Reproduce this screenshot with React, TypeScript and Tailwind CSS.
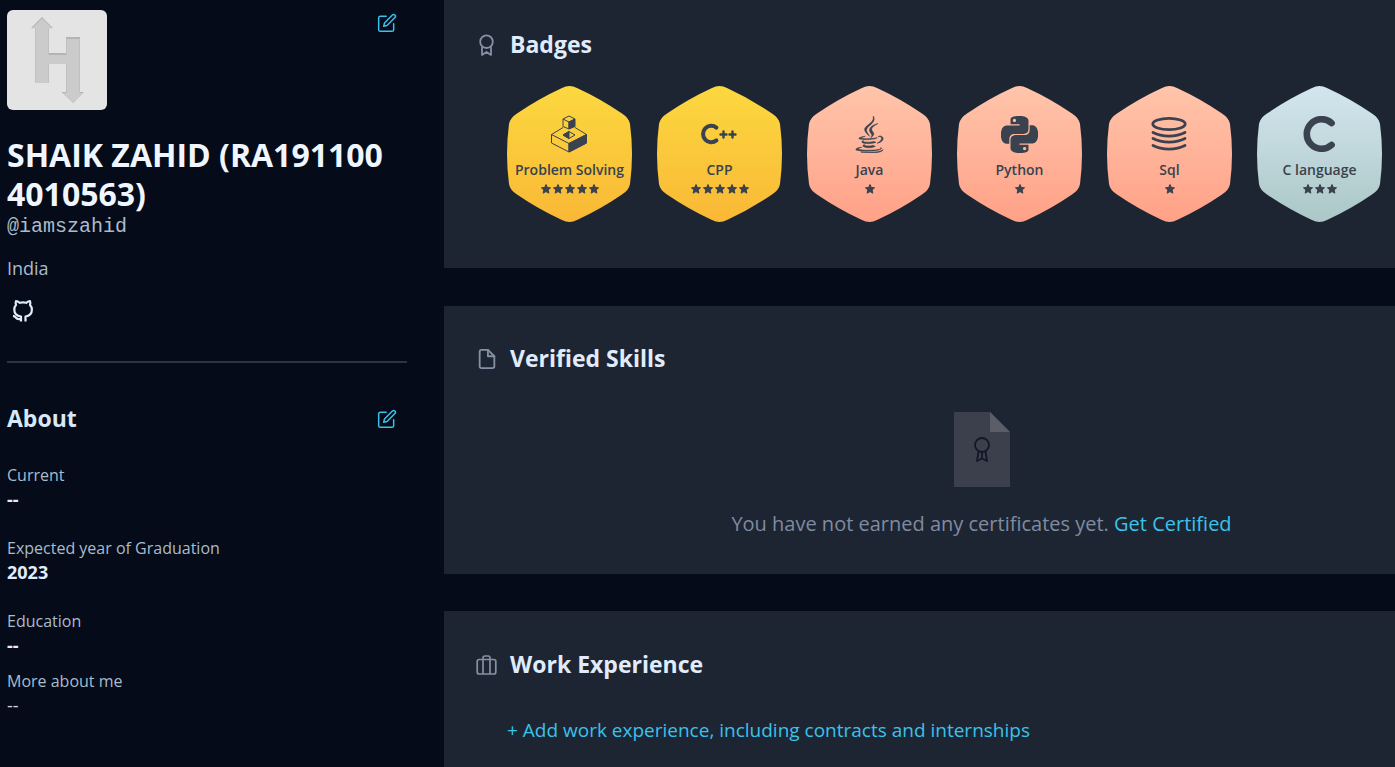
import type { ReactNode } from 'react';
import { FiEdit, FiFile } from 'react-icons/fi';
import { FaJava } from 'react-icons/fa';
import { SiPython } from 'react-icons/si';

type Tone = 'gold' | 'bronze' | 'silver';

const TONES: Record<Tone, [string, string]> = {
  gold: ['#fcd83f', '#f9b836'],
  bronze: ['#ffc5ab', '#ffa187'],
  silver: ['#d3e6ef', '#abc7c6'],
};

function ProblemSolvingIcon() {
  return (
    <svg width="37" height="38" viewBox="0 0 37 38" fill="none" stroke="currentColor" strokeWidth="1" strokeLinejoin="round">
      <path d="M12 12.5 .5 19.5v8.5L18 37l17.5-9v-8.5L24 12.5" />
      <path d="M.5 19.5 18 28.5l17.5-9M18 28.5V37" />
      <path d="M18 28.5 35.5 19.5V28L18 37z" fill="currentColor" />
      <path d="M12 20l6-3.5 6 3.5-6 3.5z" />
      <path d="M12 20l6-3.5v7z" fill="currentColor" />
      <path d="M12 4l6-3 6 3-6 3zM12 4v7.5l6 2.5V7" />
      <path d="M18 7l6-3v7.5L18 14z" fill="currentColor" />
    </svg>
  );
}

function CppIcon() {
  return (
    <svg width="39" height="36" viewBox="0 0 39 36" fill="none" stroke="currentColor" strokeLinecap="round">
      <path d="M16.4 11.6a8.2 8.2 0 1 0 0 12.8" strokeWidth="4" />
      <path d="M20.5 18.5h6M23.5 15.5v6M29.5 18.5h6M32.5 15.5v6" strokeWidth="2.4" />
    </svg>
  );
}

function SqlIcon() {
  return (
    <svg width="37" height="36" viewBox="0 0 37 36" fill="none" stroke="currentColor" strokeWidth="2.8" strokeLinecap="round">
      <ellipse cx="18" cy="8" rx="16.2" ry="5.6" />
      <path d="M2 16.5c9 4.700 23 4.700 32 0M2 22.500c9 4.700 23 4.700 32 0M2 29.500c9 4.700 23 4.700 32 0" />
    </svg>
  );
}

function CIcon() {
  return (
    <svg width="37" height="36" viewBox="0 0 37 36" fill="none" stroke="currentColor" strokeWidth="6.6" strokeLinecap="round">
      <path d="M30.600 7.100a14.800 14.800 0 1 0 0 21.800" />
    </svg>
  );
}

function Star() {
  return (
    <svg width="10" height="10" viewBox="0 0 20 20" fill="currentColor" stroke="currentColor" strokeWidth="2" strokeLinejoin="round">
      <path d="M10 1l2.700 5.900 6.400.7-4.800 4.300 1.400 6.400-5.700-3.200-5.700 3.200 1.400-6.400L.9 7.600l6.400-.7z" />
    </svg>
  );
}

function RibbonIcon() {
  return (
    <svg width="22" height="22" viewBox="0 0 22 22" fill="none" stroke="currentColor" strokeWidth="1.800" strokeLinejoin="round">
      <circle cx="10.500" cy="7.700" r="6.300" />
      <path d="M6 12.500v8.400l4.500-3 4.500 3v-8.400" />
    </svg>
  );
}

function SuitcaseIcon() {
  return (
    <svg width="22" height="22" viewBox="0 0 22 22" fill="none" stroke="currentColor" strokeWidth="1.700" strokeLinejoin="round">
      <rect x="1.200" y="5.500" width="18.600" height="14.500" rx="2" />
      <path d="M7 20V4a2 2 0 0 1 2-2h3a2 2 0 0 1 2 2v16" />
    </svg>
  );
}

function GithubIcon() {
  return (
    <svg width="22" height="22" viewBox="0 0 22 22" fill="none" stroke="currentColor" strokeWidth="2.200" strokeLinejoin="round">
      <path d="M9 21.500v-5c-4-.5-6.700-2.600-6.700-7 0-2 .5-3.300 1.700-4.500C3.500 3.500 3.600 2.200 4 1.200c1.500 0 2.700.8 3.800 1.600 2-.5 4.400-.5 6.400 0 1.100-.8 2.300-1.600 3.800-1.600.4 1 .5 2.300 0 3.800 1.200 1.200 1.900 2.500 1.900 4.500 0 4.400-2.900 6.500-6.400 7v5" />
      <path d="M8.500 19c-3 .7-4-.5-4.700-1.500C3.200 16.400 2.500 16 1 15.800" />
    </svg>
  );
}

function Avatar() {
  return (
    <svg className="rounded-md" width="100" height="100" viewBox="0 0 100 100" role="img" aria-label="Profile picture">
      <defs>
        <filter id="soften" x="-10%" y="-10%" width="120%" height="120%">
          <feGaussianBlur stdDeviation="0.4" />
        </filter>
      </defs>
      <rect width="100" height="100" fill="#e4e4e4" />
      <g filter="url(#soften)">
        <path d="M35 7 46 18h-4v25h17V27h14v55h4L66 93 54.500 82H59V54H42v19H28V18h-4z" fill="#b4b4b4" />
        <path d="M35 8.500 45.500 18.500H41.500V45H59.500V29H72.500V83H76L66 93 55.500 83H59.500V54H41.500v19H28.500V18.500H25z" fill="#cbcbcb" />
      </g>
    </svg>
  );
}

const BADGES: { name: string; stars: number; tone: Tone; icon: ReactNode }[] = [
  { name: 'Problem Solving', stars: 5, tone: 'gold', icon: <ProblemSolvingIcon /> },
  { name: 'CPP', stars: 5, tone: 'gold', icon: <CppIcon /> },
  { name: 'Java', stars: 1, tone: 'bronze', icon: <FaJava size={37} strokeWidth={8} stroke="currentColor" /> },
  { name: 'Python', stars: 1, tone: 'bronze', icon: <SiPython size={37} /> },
  { name: 'Sql', stars: 1, tone: 'bronze', icon: <SqlIcon /> },
  { name: 'C language', stars: 3, tone: 'silver', icon: <CIcon /> },
];

function Badge({ name, stars, tone, icon }: (typeof BADGES)[number]) {
  const [from, to] = TONES[tone];
  const id = 'fill-' + name.replace(' ', '-');
  return (
    <li className="relative flex h-[136px] w-[125px] shrink-0 flex-col items-center pt-[30px] text-[#39424e]">
      <svg className="absolute inset-0" width="125" height="136" viewBox="0 0 125 136" aria-hidden="true">
        <defs>
          <linearGradient id={id} x1="0" y1="0" x2="0" y2="1">
            <stop offset="0" stopColor={from} />
            <stop offset="1" stopColor={to} />
          </linearGradient>
        </defs>
        <path
          fill={`url(#${id})`}
          d="M55 2Q62.500-2 70 2Q93 12.500 115 27.500Q122 32 123 38Q125 53 125 68T123 98Q122 104 115 108.500Q93 123.500 70 134Q62.500 138 55 134Q32 123.500 10 108.500Q3 104 2 98Q0 83 0 68T2 38Q3 32 10 27.500Q32 12.500 55 2Z"
        />
      </svg>
      <span className="relative flex h-9 items-center">{icon}</span>
      <span className="relative mt-2 text-sm leading-5 font-semibold whitespace-nowrap">{name}</span>
      <span className="relative mt-1 flex gap-px" role="img" aria-label={`${stars} stars`}>
        {Array.from({ length: stars }, (_, i) => (
          <span key={i} className="flex w-[11px] justify-center">
            <Star />
          </span>
        ))}
      </span>
    </li>
  );
}

function SectionTitle({ icon, children }: { icon: ReactNode; children: ReactNode }) {
  return (
    <h2 className="flex items-center gap-3 text-[23px] leading-8 font-bold text-[#e0ecfc]">
      <span className="pt-px text-[#8490a3]">{icon}</span>
      {children}
    </h2>
  );
}

function EditButton({ label }: { label: string }) {
  return (
    <button type="button" aria-label={label} className="mr-2.5 cursor-pointer pt-px text-[#39c2ea]">
      <FiEdit size={20} strokeWidth={1.8} />
    </button>
  );
}

function Field({ label, value, strong = true }: { label: string; value: string; strong?: boolean }) {
  return (
    <div>
      <dt className="text-base leading-6 text-[#a9bccc]">{label}</dt>
      <dd className={strong ? 'text-lg leading-[25px] font-bold text-[#e0ecfc]' : 'text-lg leading-[25px] text-[#c9d8e8]'}>{value}</dd>
    </div>
  );
}

export default function App() {
  return (
    <div className="flex min-h-screen bg-[#050b18] font-['Open_Sans',sans-serif]">
      <aside className="mr-[37px] ml-[7px] w-[400px] shrink-0 pt-2.5">
        <div className="flex items-start justify-between">
          <Avatar />
          <span className="pt-0.5">
            <EditButton label="Edit profile" />
          </span>
        </div>
        <h1 className="mt-[25px] text-[32px] leading-[39px] font-bold text-[#f0f6ff]">
          <span className="block">SHAIK ZAHID (RA191100</span>
          <span className="block">4010563)</span>
        </h1>
        <p className="mt-0.5 font-['Liberation_Mono',monospace] text-xl leading-6 text-[#a9bccc]">@iamszahid</p>
        <p className="mt-[17px] text-lg leading-6 text-[#a9bccc]">India</p>
        <a href="#github" aria-label="GitHub" className="mt-5 ml-[5px] block w-fit text-[#e0ecfc]">
          <GithubIcon />
        </a>
        <hr className="mt-[39px] border-t-2 border-[#2c3341]" />
        <div className="mt-[39px] flex items-center justify-between">
          <h2 className="text-[23px] leading-8 font-bold text-[#d8e8f8]">About</h2>
          <EditButton label="Edit about" />
        </div>
        <dl className="mt-[29px] flex flex-col gap-6">
          <Field label="Current" value="--" />
          <Field label="Expected year of Graduation" value="2023" />
          <div className="flex flex-col gap-[11px]">
            <Field label="Education" value="--" />
            <Field label="More about me" value="--" strong={false} />
          </div>
        </dl>
      </aside>

      <main className="flex min-w-0 flex-1 flex-col">
        <section className="bg-[#1e2532] pt-7 pb-[46px] pl-8">
          <SectionTitle icon={<RibbonIcon />}>Badges</SectionTitle>
          <ul className="mt-[26px] ml-[31px] flex gap-[25px]">
            {BADGES.map((badge) => (
              <Badge key={badge.name} {...badge} />
            ))}
          </ul>
        </section>

        <section className="mt-[38px] bg-[#1e2532] pt-9 pb-[35px] pl-8">
          <SectionTitle icon={<FiFile size={22} strokeWidth={2} />}>Verified Skills</SectionTitle>
          <div className="mt-[38px] flex flex-col items-center pl-[92px]">
            <svg width="56" height="75" viewBox="0 0 56 75" aria-hidden="true">
              <path d="M0 0h36l20 20v55H0z" fill="#3b404c" />
              <path d="M36 0l20 20H36z" fill="#5b5e69" />
              <g fill="none" stroke="#111827" strokeWidth="1.800" strokeLinejoin="round">
                <circle cx="28" cy="33" r="7" />
                <path d="M24.500 39.500 23 49l5-2.500 5 2.500-1.500-9.500M28 40v6.500" />
              </g>
            </svg>
            <p className="mt-[22px] text-xl leading-[30px] text-[#7f8ba0]">
              You have not earned any certificates yet.{' '}
              <a href="#certify" className="text-[#39c2ea]">
                Get Certified
              </a>
            </p>
          </div>
        </section>

        <section className="mt-[37px] flex-1 bg-[#1e2532] pt-[37px] pb-6 pl-8">
          <SectionTitle icon={<SuitcaseIcon />}>Work Experience</SectionTitle>
          <button type="button" className="mt-9 ml-[31px] cursor-pointer text-left text-[19px] leading-7 text-[#39c2ea]">
            + Add work experience, including contracts and internships
          </button>
        </section>
      </main>
    </div>
  );
}
